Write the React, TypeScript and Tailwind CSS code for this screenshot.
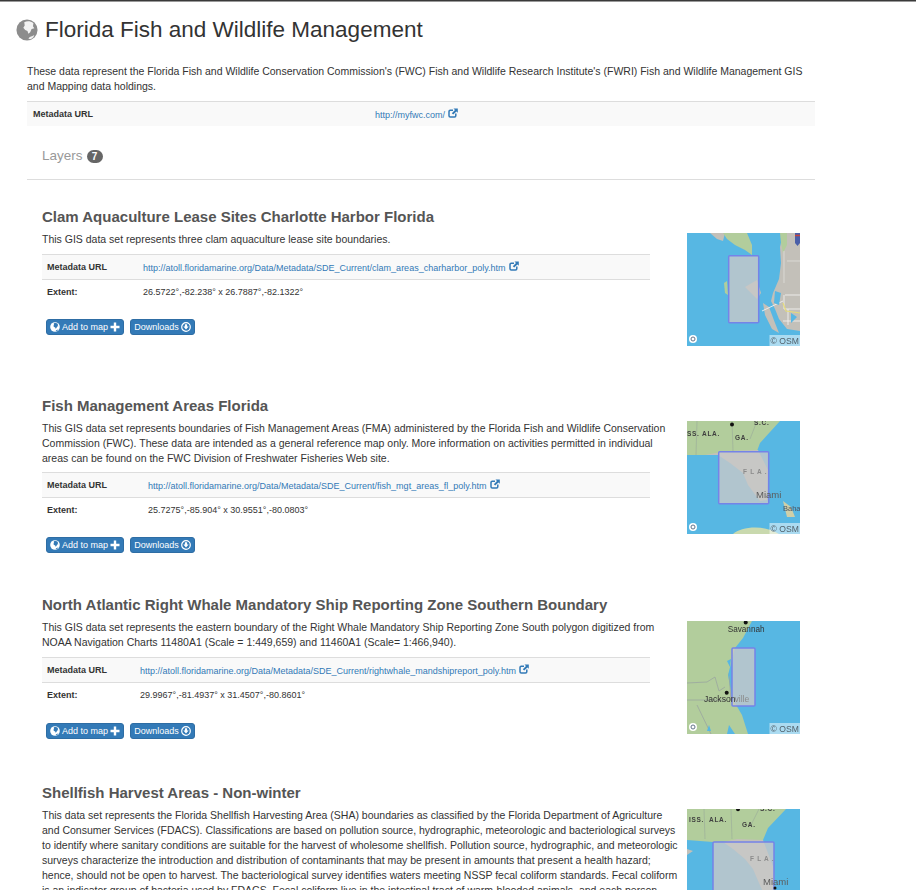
import React from "react";

const WATER = "#57b7e3";
const LAND = "#c3c0b9";
const GREEN = "#b2cd9c";
const FONT = "Liberation Sans, sans-serif";

function Globe({ sea, land, className }: { sea: string; land: string; className: string }) {
  return (
    <svg viewBox="0 0 24 24" className={className}>
      <circle cx="12" cy="12" r="11.5" fill={sea} />
      <path d="M9 3.5C12 2 16 2.2 19 4.5L18.5 8 20 10 17 11 15.5 14.5 13.5 16 12.5 13 10 12 8 9.5 9.5 7Z" fill={land} />
      <path d="M13.5 21.5 15 19.5 18 18.5 20 17.5 19 20 16 22Z" fill={land} />
    </svg>
  );
}

function Attribution() {
  return (
    <g>
      <rect x="82.5" y="102" width="30.5" height="11" fill="#ffffff" opacity="0.5" />
      <text x="83.6" y="111" fontSize="8.6" fill="#52616b" fontFamily={FONT}>© OSM</text>
      <circle cx="6" cy="106" r="4" fill="#ffffff" />
      <circle cx="6" cy="106" r="2" fill="none" stroke="#64748b" strokeWidth="1" />
    </g>
  );
}

function Box({ x, y, w, h }: { x: number; y: number; w: number; h: number }) {
  return <rect x={x} y={y} width={w} height={h} rx="1" fill="#c8c8c8" fillOpacity="0.8" stroke="#7583e8" strokeWidth="1.5" />;
}

function Label({ x, y, children, size = 6.5, fill = "#3f3f3f" }: { x: number; y: number; children: React.ReactNode; size?: number; fill?: string }) {
  return <text x={x} y={y} fontSize={size} fontWeight="700" fill={fill} letterSpacing="0.7" fontFamily={FONT}>{children}</text>;
}

function Map1() {
  return (
    <svg viewBox="0 0 113 113" className="w-full h-full block blur-[0.4px]">
      <rect width="113" height="113" fill={WATER} />
      <path d="M96 0H113V98L100 96 92 86 88 76 84 68 86 60 92 46 94 30 93 14Z" fill={LAND} />
      <path d="M76 70 82 74 88 90 92 100 85 96 78 82Z" fill={LAND} />
      <path d="M23 0H38L36 8 30 6Z" fill={LAND} />
      <path d="M36 0H60L65 12 65 22 58 17 48 12 40 6Z" fill={GREEN} />
      <path d="M37 50 40 48 41 62 38 60Z" fill={GREEN} />
      <path d="M93 0H100L100 12 96 20 94 10Z" fill={GREEN} />
      <path d="M58 54 70 47 74 60 70 66Z" fill={LAND} />
      <path d="M98 62H113M97 62V76H113M96 88H113M101 76V92M75 78 96 68" stroke="#f1f1ef" strokeWidth="0.9" fill="none" />
      <path d="M96 70 99 78 113 80" stroke="#e6dc7a" strokeWidth="1.2" fill="none" />
      <path d="M97 18V50M100 28H113" stroke="#dcdcd8" strokeWidth="0.9" fill="none" />
      <path d="M88 58 94 60 92 72 87 70ZM104 80 110 84 104 90Z" fill={WATER} />
      <path d="M108 0H113V10L110.5 13 108 10Z" fill="#4a5fa8" />
      <path d="M108 2.5H113" stroke="#c8433c" strokeWidth="1.5" />
      <Box x={41.7} y={22.7} w={30} h={67} />
      <Attribution />
    </svg>
  );
}

function Map2() {
  return (
    <svg viewBox="0 0 113 113" className="w-full h-full block blur-[0.4px]">
      <rect width="113" height="113" fill={WATER} />
      <path d="M0 0H93L73 22 70 30 31 34 0 34Z" fill={GREEN} />
      <path d="M18 34 31 34 43 42 56 52 61 64 73 80 80 79 81 49 71 29 40 30Z" fill={LAND} />
      <path d="M10 0 9 34M45 0 46 30M70 0 63 18" stroke="#9fb39a" strokeWidth="0.8" fill="none" />
      <path d="M96 80 104 86 108 96 100 96Z" fill="#cfcfa8" />
      <path d="M46 113C54 106 76 103 92 113Z" fill="#c9d9ae" />
      <Box x={31.7} y={30.7} w={50} h={52} />
      <circle cx="45" cy="3.4" r="2" fill="#111" />
      <Label x={0} y={15}>SS.</Label>
      <Label x={15} y={15}>ALA.</Label>
      <Label x={48} y={19}>GA.</Label>
      <Label x={67} y={3.5}>S.C.</Label>
      <Label x={56} y={53} fill="#8b8b8b">F L A .</Label>
      <text x="69" y="77" fontSize="9.5" fill="#5b5b5b" fontFamily={FONT}>Miami</text>
      <text x="96" y="90" fontSize="7.5" fill="#4b5563" fontFamily={FONT}>Baha</text>
      <Attribution />
    </svg>
  );
}

function Map3() {
  return (
    <svg viewBox="0 0 113 113" className="w-full h-full block blur-[0.4px]">
      <rect width="113" height="113" fill={GREEN} />
      <path d="M65 0 56 17 48 27 41 54 45 77 55 94 61 113H113V0Z" fill={WATER} />
      <path d="M0 62 20 61 28 56 32 70 38 66M0 79H40M10 84 24 113M42 52 44 80" stroke="#9aa6a0" strokeWidth="0.8" fill="none" />
      <path d="M40 40 44 38 43 46ZM42 50 45 50 42 56ZM22 104 24 110 20 110ZM42 104 48 113H40Z" fill={WATER} />
      <Box x={45} y={27} w={23} h={58} />
      <circle cx="58.7" cy="1.5" r="2" fill="#111" />
      <circle cx="39.7" cy="71.7" r="2" fill="#111" />
      <text x="40.7" y="11" fontSize="8.2" fill="#333" fontFamily={FONT}>Savannah</text>
      <text x="17" y="81" fontSize="8.6" fill="#333" fontFamily={FONT}>Jackson</text>
      <text x="47.5" y="81" fontSize="8.6" fill="#8b8b8b" fontFamily={FONT}>ville</text>
      <Attribution />
    </svg>
  );
}

function Map4() {
  return (
    <svg viewBox="0 0 113 113" className="w-full h-full block blur-[0.4px]">
      <rect width="113" height="113" fill={WATER} />
      <path d="M0 0H99L81 19 76 31 26 33 0 31Z" fill={GREEN} />
      <path d="M36 33 46 40 58 50 66 60 72 74 80 92 88 90 87 60 76 31 50 30Z" fill={LAND} />
      <path d="M0 40 6 42 0 46Z" fill={LAND} />
      <path d="M17 0 18 30M44 0 45 30M72 0 64 16" stroke="#9fb39a" strokeWidth="0.8" fill="none" />
      <Box x={26} y={33} w={61} h={70} />
      <circle cx="51" cy="0.3" r="2" fill="#111" />
      <circle cx="88" cy="79" r="1.5" fill="#111" />
      <Label x={2} y={13}>ISS.</Label>
      <Label x={22} y={13}>ALA.</Label>
      <Label x={55} y={18}>GA.</Label>
      <Label x={73} y={2}>S.C.</Label>
      <Label x={63} y={52} fill="#8b8b8b">F L A .</Label>
      <text x="76" y="76" fontSize="9.5" fill="#5b5b5b" fontFamily={FONT}>Miami</text>
    </svg>
  );
}

function Buttons({ top }: { top: string }) {
  return (
    <div className={`flex gap-[6px] ${top} ml-[4px]`}>
      <button className="flex items-center gap-[2px] h-[16px] w-[78px] justify-center rounded-[3px] bg-[#337ab7] border border-[#2e6da4] text-white text-[9px] leading-none">
        <Globe sea="#ffffff" land="#337ab7" className="w-[10px] h-[10px]" />
        <span>Add to map</span>
        <svg viewBox="0 0 10 10" className="w-[10px] h-[10px]">
          <path d="M5 0.5V9.5M0.5 5H9.5" stroke="#ffffff" strokeWidth="2.4" fill="none" />
        </svg>
      </button>
      <button className="flex items-center gap-[2px] h-[16px] w-[65px] justify-center rounded-[3px] bg-[#337ab7] border border-[#2e6da4] text-white text-[9px] leading-none">
        <span>Downloads</span>
        <svg viewBox="0 0 10 10" className="w-[10px] h-[10px]">
          <circle cx="5" cy="5" r="4.3" fill="none" stroke="#ffffff" strokeWidth="1.2" />
          <path d="M3.9 2.2H6.1V4.6H7.6L5 7.6 2.4 4.6H3.9Z" fill="#ffffff" />
        </svg>
      </button>
    </div>
  );
}

function LinkIcon() {
  return (
    <svg viewBox="0 0 10 10" className="inline-block w-[10px] h-[10px] ml-[3px] align-[-0.5px]">
      <path d="M5 2.2H2.2Q1 2.2 1 3.4V7.8Q1 9 2.2 9H6.6Q7.8 9 7.8 7.8V5.6" fill="none" stroke="#337ab7" strokeWidth="1.5" />
      <path d="M5.5 0.5H9.8V4.8L8.4 3.4 5.2 6.6 3.8 5.2 7 2Z" fill="#337ab7" />
    </svg>
  );
}

type LayerProps = {
  title: string;
  lines: string[];
  url: string;
  extent: string;
  col: string;
  map: React.ReactNode;
  spacing: string;
  tableTop: string;
  buttonsTop: string;
  mapTop: string;
};

function Layer({ title, lines, url, extent, col, map, spacing, tableTop, buttonsTop, mapTop }: LayerProps) {
  return (
    <section className={`flex ${spacing}`}>
      <div className="w-[608px] shrink-0">
        <h3 className="text-[15px] leading-[18px] font-bold text-[#555555]">{title}</h3>
        <div className="mt-[6px] text-[10.5px] leading-[15px] text-[#333333] whitespace-nowrap">
          {lines.map((l) => (
            <p key={l}>{l}</p>
          ))}
        </div>
        <div className={`${tableTop} border-t border-[#dddddd] bg-[#f9f9f9] h-[25px] pt-[1px] flex items-center text-[9px]`}>
          <span className={`${col} pl-[5px] shrink-0 font-bold text-[#333333]`}>Metadata URL</span>
          <a className="text-[#337ab7]">{url}<LinkIcon /></a>
        </div>
        <div className="border-t border-[#dddddd] h-[25px] pt-[2px] flex items-center text-[9px]">
          <span className={`${col} pl-[5px] shrink-0 font-bold text-[#333333]`}>Extent:</span>
          <span className="text-[#333333]">{extent}</span>
        </div>
        <Buttons top={buttonsTop} />
      </div>
      <div className={`ml-[37px] ${mapTop} w-[113px] h-[113px] shrink-0`}>{map}</div>
    </section>
  );
}

export default function App() {
  return (
    <div className="relative h-[890px] w-[916px] overflow-hidden bg-white font-['Liberation_Sans',Arial,sans-serif]">
      <div className="h-[2px] bg-[#3a3a3a] border-b border-[#999999]" />
      <header className="flex items-center pl-[16px] pt-[14px]">
        <Globe sea="#8c8c8c" land="#f2f2f2" className="w-[22px] h-[22px]" />
        <h1 className="ml-[7px] text-[22.5px] leading-[28px] text-[#333333]">Florida Fish and Wildlife Management</h1>
      </header>
      <div className="ml-[27px] w-[788px]">
        <p className="mt-[20px] text-[10.5px] leading-[15px] text-[#333333]">
          These data represent the Florida Fish and Wildlife Conservation Commission's (FWC) Fish and Wildlife Research Institute's (FWRI) Fish and Wildlife Management GIS and Mapping data holdings.
        </p>
        <div className="mt-[7px] h-[25px] pt-[1px] border-t border-[#dddddd] bg-[#f9f9f9] flex items-center text-[9px]">
          <span className="w-[348px] pl-[6px] font-bold text-[#333333]">Metadata URL</span>
          <a className="text-[#337ab7]">http://myfwc.com/<LinkIcon /></a>
        </div>
        <div className="mt-[20px] flex items-center pl-[15px] h-[20px]">
          <span className="text-[13.5px] text-[#999999]">Layers</span>
          <span className="ml-[4px] w-[16px] h-[13px] rounded-full bg-[#666666] text-white text-[10px] font-bold flex items-center justify-center">7</span>
        </div>
        <div className="mt-[13px] border-t border-[#dddddd]" />
      </div>
      <div className="ml-[42px] mt-[28px]">
        <Layer
          spacing=""
          tableTop="mt-[7px]"
          buttonsTop="mt-[15px]"
          mapTop="mt-[25px]"
          col="w-[101px]"
          title="Clam Aquaculture Lease Sites Charlotte Harbor Florida"
          lines={["This GIS data set represents three clam aquaculture lease site boundaries."]}
          url="http://atoll.floridamarine.org/Data/Metadata/SDE_Current/clam_areas_charharbor_poly.htm"
          extent="26.5722°,-82.238° x 26.7887°,-82.1322°"
          map={<Map1 />}
        />
        <Layer
          spacing="mt-[51px]"
          tableTop="mt-[6px]"
          buttonsTop="mt-[15px]"
          mapTop="mt-[24px]"
          col="w-[106px]"
          title="Fish Management Areas Florida"
          lines={[
            "This GIS data set represents boundaries of Fish Management Areas (FMA) administered by the Florida Fish and Wildlife Conservation",
            "Commission (FWC). These data are intended as a general reference map only. More information on activities permitted in individual",
            "areas can be found on the FWC Division of Freshwater Fisheries Web site.",
          ]}
          url="http://atoll.floridamarine.org/Data/Metadata/SDE_Current/fish_mgt_areas_fl_poly.htm"
          extent="25.7275°,-85.904° x 30.9551°,-80.0803°"
          map={<Map2 />}
        />
        <Layer
          spacing="mt-[43px]"
          tableTop="mt-[7px]"
          buttonsTop="mt-[16px]"
          mapTop="mt-[25px]"
          col="w-[98px]"
          title="North Atlantic Right Whale Mandatory Ship Reporting Zone Southern Boundary"
          lines={[
            "This GIS data set represents the eastern boundary of the Right Whale Mandatory Ship Reporting Zone South polygon digitized from",
            "NOAA Navigation Charts 11480A1 (Scale = 1:449,659) and 11460A1 (Scale= 1:466,940).",
          ]}
          url="http://atoll.floridamarine.org/Data/Metadata/SDE_Current/rightwhale_mandshipreport_poly.htm"
          extent="29.9967°,-81.4937° x 31.4507°,-80.8601°"
          map={<Map3 />}
        />
        <Layer
          spacing="mt-[45px]"
          tableTop="mt-[7px]"
          buttonsTop="mt-[15px]"
          mapTop="mt-[25px]"
          col="w-[100px]"
          title="Shellfish Harvest Areas - Non-winter"
          lines={[
            "This data set represents the Florida Shellfish Harvesting Area (SHA) boundaries as classified by the Florida Department of Agriculture",
            "and Consumer Services (FDACS). Classifications are based on pollution source, hydrographic, meteorologic and bacteriological surveys",
            "to identify where sanitary conditions are suitable for the harvest of wholesome shellfish. Pollution source, hydrographic, and meteorologic",
            "surveys characterize the introduction and distribution of contaminants that may be present in amounts that present a health hazard;",
            "hence, should not be open to harvest. The bacteriological survey identifies waters meeting NSSP fecal coliform standards. Fecal coliform",
            "is an indicator group of bacteria used by FDACS. Fecal coliform live in the intestinal tract of warm-blooded animals, and each person",
          ]}
          url=""
          extent=""
          map={<Map4 />}
        />
      </div>
    </div>
  );
}
